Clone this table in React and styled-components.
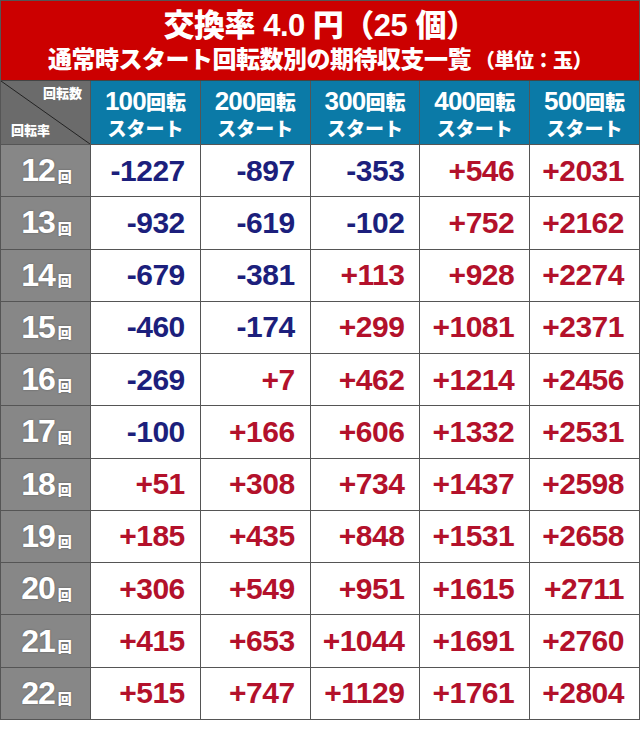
import React from 'react';
import styled, { createGlobalStyle } from 'styled-components';

const GlobalStyle = createGlobalStyle`
  html, body { margin: 0; padding: 0; background: #ffffff; }
  body { font-family: "Liberation Sans", "Noto Sans CJK JP", sans-serif; }
`;

const Wrap = styled.div`
  width: 640px;
  box-sizing: border-box;
  border-left: 1px solid #555;
  border-top: 1px solid #555;
`;

const TitleBar = styled.div`
  height: 80px;
  box-sizing: border-box;
  background: #cc0000;
  border-right: 1px solid #555;
  border-bottom: 1px solid #444;
  color: #fff;
  display: flex;
  flex-direction: column;
  align-items: center;
  justify-content: center;
  padding-top: 4px;
  font-family: "Liberation Sans", "Noto Sans CJK JP", sans-serif;
  font-weight: 900;
`;

const Title = styled.div`
  font-size: 31px;
  line-height: 36px;
  letter-spacing: -0.5px;
`;

const Sub = styled.div`
  font-size: 24px;
  line-height: 32px;
  letter-spacing: -0.5px;
`;

const Small = styled.span`
  font-size: 20px;
  margin-left: 4px;
`;

const Grid = styled.div`
  display: grid;
  grid-template-columns: 90px repeat(5, 1fr);
  grid-template-rows: 64px;
  grid-auto-rows: 52.27px;
`;

const Cell = styled.div`
  box-sizing: border-box;
  border-right: 1px solid #555;
  border-bottom: 1px solid #555;
  display: flex;
  align-items: center;
`;

const Corner = styled(Cell)`
  position: relative;
  background: #6b6b6b;
  color: #fff;
  font-family: "Noto Sans CJK JP", sans-serif;
  font-weight: 900;
  font-size: 13px;
  overflow: hidden;
`;

const CornerTop = styled.span`
  position: absolute;
  top: 2px;
  right: 8px;
`;

const CornerBottom = styled.span`
  position: absolute;
  bottom: 5px;
  left: 10px;
`;

const Diagonal = styled.svg`
  position: absolute;
  inset: 0;
  width: 100%;
  height: 100%;
`;

const HeadCell = styled(Cell)`
  background: #0b7aa7;
  color: #fff;
  flex-direction: column;
  justify-content: center;
  font-weight: 900;
  line-height: 1;
`;

const HeadNum = styled.div`
  font-family: "Liberation Sans", sans-serif;
  font-weight: 700;
  font-size: 26px;
  letter-spacing: -0.8px;
  span {
    font-family: "Noto Sans CJK JP", sans-serif;
    font-weight: 900;
    font-size: 20px;
    letter-spacing: 0;
  }
`;

const HeadStart = styled.div`
  font-family: "Noto Sans CJK JP", sans-serif;
  font-size: 19px;
  margin-top: 4px;
`;

const RowLabel = styled(Cell)`
  background: #878787;
  color: #fff;
  justify-content: center;
  font-weight: 700;
  text-shadow: 0 0 2px rgba(0, 0, 0, 0.35);
  padding-left: 2px;
`;

const LabelNum = styled.span`
  font-family: "Liberation Sans", sans-serif;
  font-size: 32px;
  letter-spacing: -1px;
`;

const LabelUnit = styled.span`
  font-family: "Noto Sans CJK JP", sans-serif;
  font-weight: 900;
  font-size: 14px;
  margin-left: 3px;
  margin-top: 10px;
`;

const ValueCell = styled(Cell)`
  justify-content: flex-end;
  padding-right: 15px;
  font-family: "Liberation Sans", sans-serif;
  font-weight: 700;
  font-size: 30px;
  letter-spacing: -0.5px;
  color: ${(p) => (p.$neg ? '#1c1f7c' : '#b3112b')};
`;

const starts = [100, 200, 300, 400, 500];

const rows = [
  [12, [-1227, -897, -353, 546, 2031]],
  [13, [-932, -619, -102, 752, 2162]],
  [14, [-679, -381, 113, 928, 2274]],
  [15, [-460, -174, 299, 1081, 2371]],
  [16, [-269, 7, 462, 1214, 2456]],
  [17, [-100, 166, 606, 1332, 2531]],
  [18, [51, 308, 734, 1437, 2598]],
  [19, [185, 435, 848, 1531, 2658]],
  [20, [306, 549, 951, 1615, 2711]],
  [21, [415, 653, 1044, 1691, 2760]],
  [22, [515, 747, 1129, 1761, 2804]],
];

const fmt = (v) => (v < 0 ? `-${Math.abs(v)}` : `+${v}`);

export default function App() {
  return (
    <>
      <GlobalStyle />
      <Wrap>
        <TitleBar>
          <Title>交換率 4.0 円（25 個）</Title>
          <Sub>
            通常時スタート回転数別の期待収支一覧<Small>（単位：玉）</Small>
          </Sub>
        </TitleBar>
        <Grid>
          <Corner>
            <Diagonal viewBox="0 0 90 64" preserveAspectRatio="none">
              <line x1="0" y1="0" x2="90" y2="64" stroke="#222" strokeWidth="1" />
            </Diagonal>
            <CornerTop>回転数</CornerTop>
            <CornerBottom>回転率</CornerBottom>
          </Corner>
          {starts.map((s) => (
            <HeadCell key={s}>
              <HeadNum>
                {s}
                <span>回転</span>
              </HeadNum>
              <HeadStart>スタート</HeadStart>
            </HeadCell>
          ))}
          {rows.map(([label, vals]) => (
            <React.Fragment key={label}>
              <RowLabel>
                <LabelNum>{label}</LabelNum>
                <LabelUnit>回</LabelUnit>
              </RowLabel>
              {vals.map((v, i) => (
                <ValueCell key={i} $neg={v < 0}>
                  {fmt(v)}
                </ValueCell>
              ))}
            </React.Fragment>
          ))}
        </Grid>
      </Wrap>
    </>
  );
}
